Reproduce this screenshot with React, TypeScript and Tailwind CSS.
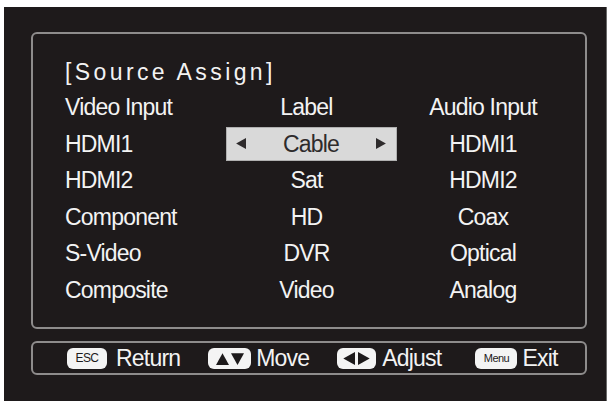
import React from 'react';

// rijen van de bron-toewijzing
const rows = [
  { video: 'HDMI1', label: 'Cable', audio: 'HDMI1' },
  { video: 'HDMI2', label: 'Sat', audio: 'HDMI2' },
  { video: 'Component', label: 'HD', audio: 'Coax' },
  { video: 'S-Video', label: 'DVR', audio: 'Optical' },
  { video: 'Composite', label: 'Video', audio: 'Analog' },
];

const Badge: React.FC<{ children: React.ReactNode; className?: string }> = ({ children, className }) => (
  <div className={`flex h-[21px] items-center justify-center rounded-[6px] bg-[#f4f4f4] text-[#1d1a1b] ${className ?? ''}`}>
    {children}
  </div>
);

const Tri: React.FC<{ dir: 'up' | 'down' | 'left' | 'right'; size?: number; color?: string }> = ({ dir, size = 11, color = '#1d1a1b' }) => {
  const pts = {
    up: '0,10 5,1 10,10',
    down: '0,1 10,1 5,10',
    left: '10,0 1,5 10,10',
    right: '0,0 9,5 0,10',
  }[dir];
  return (
    <svg width={size} height={size} viewBox="0 0 10 10">
      <polygon points={pts} fill={color} />
    </svg>
  );
};

export default function App() {
  return (
    <div className="h-[401px] w-[609px] overflow-hidden bg-white font-['Liberation_Sans',Arial,sans-serif]">
      <div className="ml-[4px] mt-[7px] h-[394px] w-[603px] border-r border-[#6a6a6a] bg-[#1e1a1b] pt-[25px]">
        {/* hoofdpaneel */}
        <div className="ml-[27px] h-[297px] w-[556px] rounded-[6px] border-2 border-[#8e8c8c] pl-[32px] pt-[26px] text-[23px] leading-[24px] tracking-[-0.8px] text-[#f3f3f3]">
          <div className="h-[24px] text-[23px] tracking-[3.4px]">[Source Assign]</div>
          <div className="mt-[5px] grid grid-cols-[161px_171px_172px]">
            <div className="flex h-[36.5px] items-center">Video Input</div>
            <div className="flex h-[36.5px] items-center justify-center pr-[10px]">Label</div>
            <div className="flex h-[36.5px] items-center justify-center">Audio Input</div>
            {rows.map((r, i) => (
              <React.Fragment key={r.video}>
                <div className="flex h-[36.5px] items-center">{r.video}</div>
                {i === 0 ? (
                  <div className="flex h-[36.5px] items-center">
                    <div className="flex h-[34px] w-full items-center justify-between border border-[#b0b0b0] bg-[#d9d9d9] pl-[8px] pr-[9px] text-[#2e2b2c]">
                      <Tri dir="left" color="#2e2b2c" />
                      <span>{r.label}</span>
                      <Tri dir="right" color="#2e2b2c" />
                    </div>
                  </div>
                ) : (
                  <div className="flex h-[36.5px] items-center justify-center pr-[10px]">{r.label}</div>
                )}
                <div className="flex h-[36.5px] items-center justify-center">{r.audio}</div>
              </React.Fragment>
            ))}
          </div>
        </div>

        {/* voetbalk */}
        <div className="ml-[27px] mt-[12px] flex h-[34px] w-[556px] items-center rounded-[6px] border-2 border-[#8e8c8c] pl-[34px] text-[23px] leading-[24px] tracking-[-0.8px] text-[#f3f3f3]">
          <Badge className="w-[40px] text-[12px] tracking-[-0.6px]">ESC</Badge>
          <span className="ml-[9px]">Return</span>
          <Badge className="ml-[28px] w-[43px] gap-[2px]">
            <Tri dir="up" size={13} />
            <Tri dir="down" size={13} />
          </Badge>
          <span className="ml-[5px]">Move</span>
          <Badge className="ml-[28px] w-[39px] gap-[3px]">
            <Tri dir="left" size={13} />
            <Tri dir="right" size={13} />
          </Badge>
          <span className="ml-[6px]">Adjust</span>
          <Badge className="ml-[34px] w-[42px] text-[11px] tracking-[-0.6px]">Menu</Badge>
          <span className="ml-[5px]">Exit</span>
        </div>
      </div>
    </div>
  );
}
